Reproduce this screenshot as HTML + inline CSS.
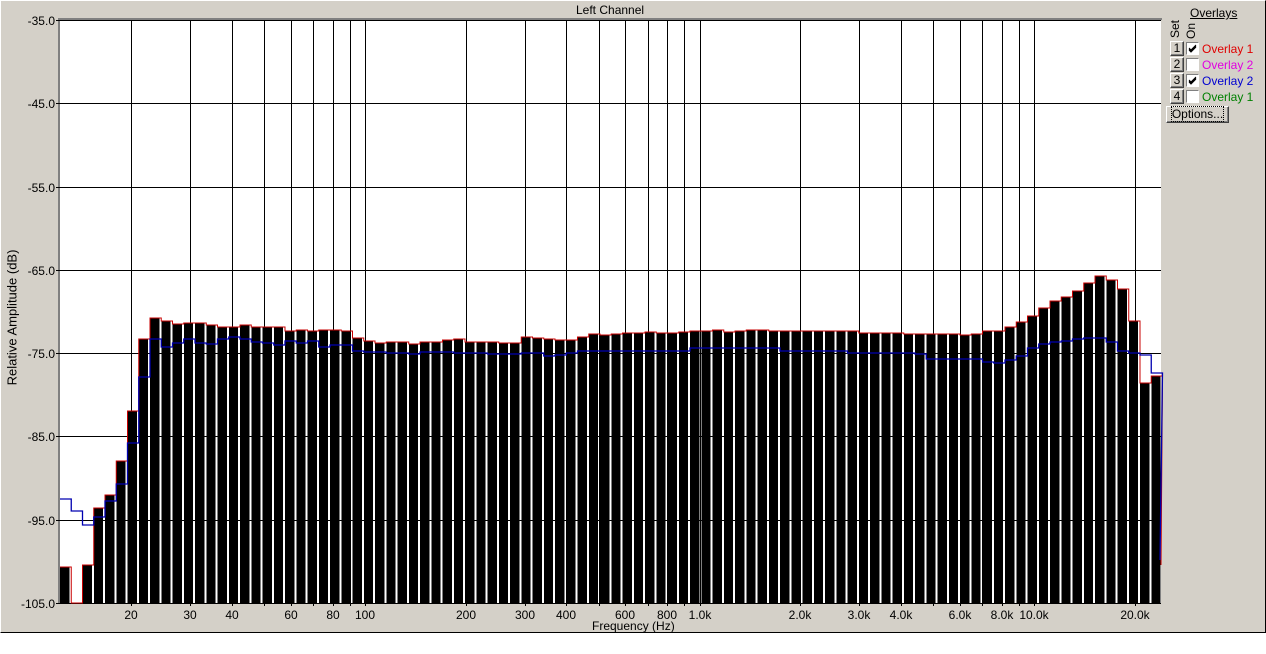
<!DOCTYPE html>
<html><head><meta charset="utf-8"><style>
html,body{margin:0;padding:0;background:#fff;}
body{width:1266px;height:654px;position:relative;overflow:hidden;font-family:"Liberation Sans",sans-serif;font-size:12px;}
#win{position:absolute;left:0;top:0;width:1264px;height:631px;background:#d4d0c8;border-top:1px solid #fff;border-left:1px solid #fff;border-right:1px solid #000;border-bottom:1px solid #000;}
.t{position:absolute;white-space:nowrap;}
.btn{position:absolute;background:#d4d0c8;border-top:1px solid #fff;border-left:1px solid #fff;border-right:1px solid #404040;border-bottom:1px solid #404040;box-shadow:inset -1px -1px 0 #808080;text-align:center;line-height:13px;font-size:12px;}
.cb{position:absolute;width:11px;height:11px;background:#fff;border-top:1px solid #808080;border-left:1px solid #808080;border-right:1px solid #fff;border-bottom:1px solid #fff;}
</style></head><body>
<div id="win"></div>
<svg id="s" width="1266" height="654" style="position:absolute;left:0;top:0" xmlns="http://www.w3.org/2000/svg" shape-rendering="crispEdges"></svg>
<div class="t" style="left:576px;top:3px;">Left Channel</div>
<div class="t" style="left:-63px;top:310px;transform:rotate(-90deg);width:150px;text-align:center;font-size:13px;">Relative Amplitude (dB)</div>
<div class="t" style="left:592px;top:619px;">Frequency (Hz)</div>
<div class="t" style="left:1190px;top:6px;text-decoration:underline;">Overlays</div>
<div class="t" style="left:1166px;top:22px;transform:rotate(-90deg);">Set</div>
<div class="t" style="left:1183px;top:24px;transform:rotate(-90deg);">On</div>
<div class="btn" style="left:1170px;top:41px;width:12px;height:13px;">1</div>
<div class="btn" style="left:1170px;top:57px;width:12px;height:13px;">2</div>
<div class="btn" style="left:1170px;top:73px;width:12px;height:13px;">3</div>
<div class="btn" style="left:1170px;top:89px;width:12px;height:13px;">4</div>
<div class="cb" style="left:1186px;top:42px;"><svg width="11" height="11"><path d="M2 5 L4 7 L9 2 M2 6 L4 8 L9 3 M2 7 L4 9 L9 4" stroke="#000" fill="none"/></svg></div>
<div class="cb" style="left:1186px;top:58px;"></div>
<div class="cb" style="left:1186px;top:74px;"><svg width="11" height="11"><path d="M2 5 L4 7 L9 2 M2 6 L4 8 L9 3 M2 7 L4 9 L9 4" stroke="#000" fill="none"/></svg></div>
<div class="cb" style="left:1186px;top:90px;"></div>
<div class="t" style="left:1202px;top:42px;color:#e00000;">Overlay 1</div>
<div class="t" style="left:1202px;top:58px;color:#e000e0;">Overlay 2</div>
<div class="t" style="left:1202px;top:74px;color:#0000d0;">Overlay 2</div>
<div class="t" style="left:1202px;top:90px;color:#008000;">Overlay 1</div>
<div class="btn" style="left:1166px;top:106px;width:61px;height:15px;line-height:15px;"><span style="outline:1px dotted #000;">Options...</span></div>
<script>
var s=document.getElementById('s'),h='';
var L=60,R=1161,T=20,B=603;
h+='<rect x="'+L+'" y="'+T+'" width="'+(R-L)+'" height="'+(B-T)+'" fill="#fff"/>';
h+='<rect x="58" y="18" width="'+(R-58+1)+'" height="2" fill="#808080"/><rect x="58" y="18" width="2" height="'+(B-18+1)+'" fill="#808080"/>';
function fx(f){return Math.round(699.5+334.5*Math.log10(f/1000));}
var fr=[20,30,40,50,60,70,80,90,100,200,300,400,500,600,700,800,900,1000,2000,3000,4000,5000,6000,7000,8000,9000,10000,20000];
fr.forEach(function(f){var x=fx(f);h+='<rect x="'+x+'" y="'+T+'" width="1" height="'+(B-T+3)+'" fill="#000"/>';});
for(var k=0;k<8;k++){var y=Math.round(20+k*83.29);h+='<rect x="'+(L-4)+'" y="'+y+'" width="'+(R-L+4)+'" height="1" fill="#000"/>';
h+='<text x="55" y="'+(y+5)+'" text-anchor="end" font-family="Liberation Sans" font-size="12">'+(-35-10*k).toFixed(1)+'</text>';}
var lab={20:'20',30:'30',40:'40',60:'60',80:'80',100:'100',200:'200',300:'300',400:'400',600:'600',800:'800',1000:'1.0k',2000:'2.0k',3000:'3.0k',4000:'4.0k',6000:'6.0k',8000:'8.0k',10000:'10.0k',20000:'20.0k'};
for(var f in lab){h+='<text x="'+fx(+f)+'" y="619" text-anchor="middle" font-family="Liberation Sans" font-size="12">'+lab[f]+'</text>';}
var red=[567,603,565,508,495,461,411,339,318,321,324,323,323,325,327,327,
325,327,327,327,331,330,331,330,330,331,338,341,343,342,342,344,342,342,340,339,342,342,342,343,343,337,338,339,340,340,337,334,335,334,333,333,
332,333,333,332,331,331,330,332,331,330,330,331,331,331,331,331,331,331,331,333,333,333,333,334,334,334,334,334,
335,334,331,331,327,322,316,308,301,297,291,283,276,280,289,321,383,376];
var blue=[499,511,525,517,501,484,443,377,339,347,343,339,343,344,339,337,
339,342,343,345,341,343,341,347,345,345,351,352,352,353,353,354,352,352,352,353,353,353,354,354,354,353,353,356,355,353,351,351,351,351,351,351,
351,351,351,351,348,348,348,348,348,348,348,348,351,351,351,351,351,351,353,353,353,353,353,353,354,359,359,359,
359,359,362,363,360,356,348,344,342,341,339,338,338,342,351,353,355,373];
var P=11.25,rp='',bp='';
for(var i=0;i<red.length;i++){var x=L+i*P;
h+='<rect x="'+x.toFixed(2)+'" y="'+red[i]+'" width="9.3" height="'+(B-red[i])+'" fill="#000"/>';
rp+=(i?' L':'M')+x.toFixed(2)+' '+red[i]+' L'+(x+P).toFixed(2)+' '+red[i];
bp+=(i?' L':'M')+x.toFixed(2)+' '+blue[i]+' L'+(x+P).toFixed(2)+' '+blue[i];}
rp+=' L'+R+' 565';bp+=' L'+(R-1)+' 560';
h+='<path d="'+rp+'" stroke="#c80000" fill="none" stroke-width="1" shape-rendering="auto"/>';
h+='<path d="'+bp+'" stroke="#0000b0" fill="none" stroke-width="1.3" shape-rendering="auto"/>';
h+='<rect x="'+fx(20000)+'" y="'+B+'" width="1" height="3" fill="#000"/>';
s.innerHTML=h;
</script>
</body></html>
